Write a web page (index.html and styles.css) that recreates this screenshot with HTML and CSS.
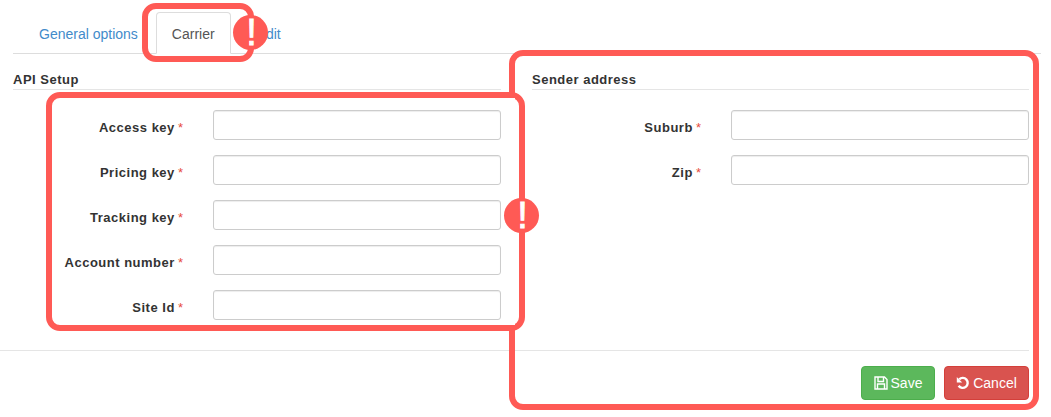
FILE: index.html
```html
<!doctype html>
<html>
  <head>
    <meta charset="utf-8">
    <title>Carrier settings</title>
    <link rel="stylesheet" href="styles.css">
  </head>
<body>
<div class="tabs">
  <a class="tab" href="#">General options</a>
  <a class="tab tab_active" href="#">Carrier</a>
  <a class="tab tab_edit" href="#">Edit</a>
</div>

<div class="columns">
  <div class="column">
    <h4>API Setup</h4>
    <div class="field"><label>Access key <span class="req">*</span></label><input type="text"></div>
    <div class="field"><label>Pricing key <span class="req">*</span></label><input type="text"></div>
    <div class="field"><label>Tracking key <span class="req">*</span></label><input type="text"></div>
    <div class="field"><label>Account number <span class="req">*</span></label><input type="text"></div>
    <div class="field"><label>Site Id <span class="req">*</span></label><input type="text"></div>
  </div>
  <div class="column column_right">
    <h4>Sender address</h4>
    <div class="field"><label>Suburb <span class="req">*</span></label><input type="text"></div>
    <div class="field"><label>Zip <span class="req">*</span></label><input type="text"></div>
  </div>
</div>

<div class="footer">
  <button class="btn btn_save">
    <svg width="14" height="14" viewBox="0 0 14 14"><path d="M1 1h9.500l2.500 2.500v9.500h-12z M4 1v4.500h5.500v-4.500 M3.500 13v-5h7v5" fill="none" stroke="#fff" stroke-width="1.400"/></svg>
    Save
  </button>
  <button class="btn btn_cancel">
    <svg width="14" height="14" viewBox="0 0 14 14"><path d="M3.200 3.300a5 5 0 1 1 -.6 6.500" fill="none" stroke="#fff" stroke-width="2.400"/><path d="M.8 1l5.400 5.400h-5.400z" fill="#fff"/></svg>
    Cancel
  </button>
</div>

<!-- annotations -->
<div class="mark mark_tab"></div>
<div class="mark mark_right"></div>
<div class="mark mark_left"></div>
<div class="alert alert_tab">!</div>
<div class="alert alert_form">!</div>
</body>
</html>
```

FILE: styles.css
```css
html, body {
  margin: 0;
  height: 100%;
  background: #fff;
  font-family: "Liberation Sans", Arial, sans-serif;
  font-size: 14px;
  color: #333;
  overflow: hidden;
}

.tabs {
  display: flex;
  gap: 2px;
  height: 41px;
  margin: 12px 10px 0 13px;
  padding-left: 10px;
  border-bottom: 1px solid #ddd;
}

.tab {
  height: 41px;
  box-sizing: border-box;
  padding: 11px 15px 0;
  line-height: 20px;
  text-decoration: none;
  color: #428bca;
  border: 1px solid transparent;
  border-radius: 4px 4px 0 0;
}

.tab_active {
  color: #555;
  background: #fff;
  border-color: #ddd;
  border-bottom-color: #fff;
  height: 42px;
}

.tab_edit {
  padding-left: 23px;
}

.columns {
  display: flex;
  gap: 31px;
  height: 296px;
  margin-left: 13px;
  margin-right: 22px;
}

.column {
  width: 488px;
}

.column_right {
  width: 497px;
}

h4 {
  margin: 17px 0 20px;
  height: 18px;
  font-size: 13px;
  line-height: 18px;
  letter-spacing: 0.5px;
  border-bottom: 1px solid #e5e5e5;
}

.field {
  display: flex;
  align-items: center;
  justify-content: flex-end;
  height: 30px;
  margin-bottom: 15px;
}

label {
  flex: 1;
  text-align: right;
  padding: 4px 30px 0 0;
  font-size: 13px;
  font-weight: bold;
  letter-spacing: 0.5px;
}

.req {
  color: #e74c3c;
  font-weight: normal;
  letter-spacing: 0;
  margin-left: -1px;
}

input {
  width: 288px;
  height: 30px;
  box-sizing: border-box;
  border: 1px solid #ccc;
  border-radius: 3px;
  box-shadow: inset 0 1px 1px rgba(0,0,0,.075);
}

.column_right input {
  width: 298px;
}

.footer {
  display: flex;
  justify-content: flex-end;
  gap: 9px;
  margin-right: 22px;
  padding-top: 15px;
  border-top: 1px solid #e5e5e5;
}

.btn {
  display: flex;
  align-items: center;
  justify-content: center;
  gap: 3px;
  height: 34px;
  padding: 0;
  border: 1px solid;
  border-radius: 4px;
  font-family: inherit;
  font-size: 14px;
  color: #fff;
}

.btn_save {
  width: 74px;
  background: #5cb85c;
  border-color: #4cae4c;
}

.btn_cancel {
  width: 85px;
  background: #d9534f;
  border-color: #d43f3a;
}

/* red callouts drawn over the screenshot */
.mark {
  position: absolute;
  box-sizing: border-box;
  border: 6px solid #ff5a55;
  border-radius: 14px;
}

.mark_tab {
  left: 142px;
  top: 3px;
  width: 112px;
  height: 59px;
}

.mark_right {
  left: 509px;
  top: 50px;
  width: 530px;
  height: 360px;
}

.mark_left {
  left: 46px;
  top: 92px;
  width: 479px;
  height: 239px;
}

/* right callout runs behind this one */
.mark_left::after {
  content: "";
  position: absolute;
  left: 457px;
  top: 0;
  width: 6px;
  height: 227px;
  background: #fff;
}

.alert {
  position: absolute;
  width: 35px;
  height: 35px;
  border-radius: 50%;
  background: #ff5a55;
  color: #fff;
  font-size: 36px;
  line-height: 36px;
  text-align: center;
  text-indent: 2px;
  -webkit-text-stroke: 1px #fff;
}

.alert_tab {
  left: 233px;
  top: 15px;
}

.alert_form {
  left: 504px;
  top: 198px;
}
```
